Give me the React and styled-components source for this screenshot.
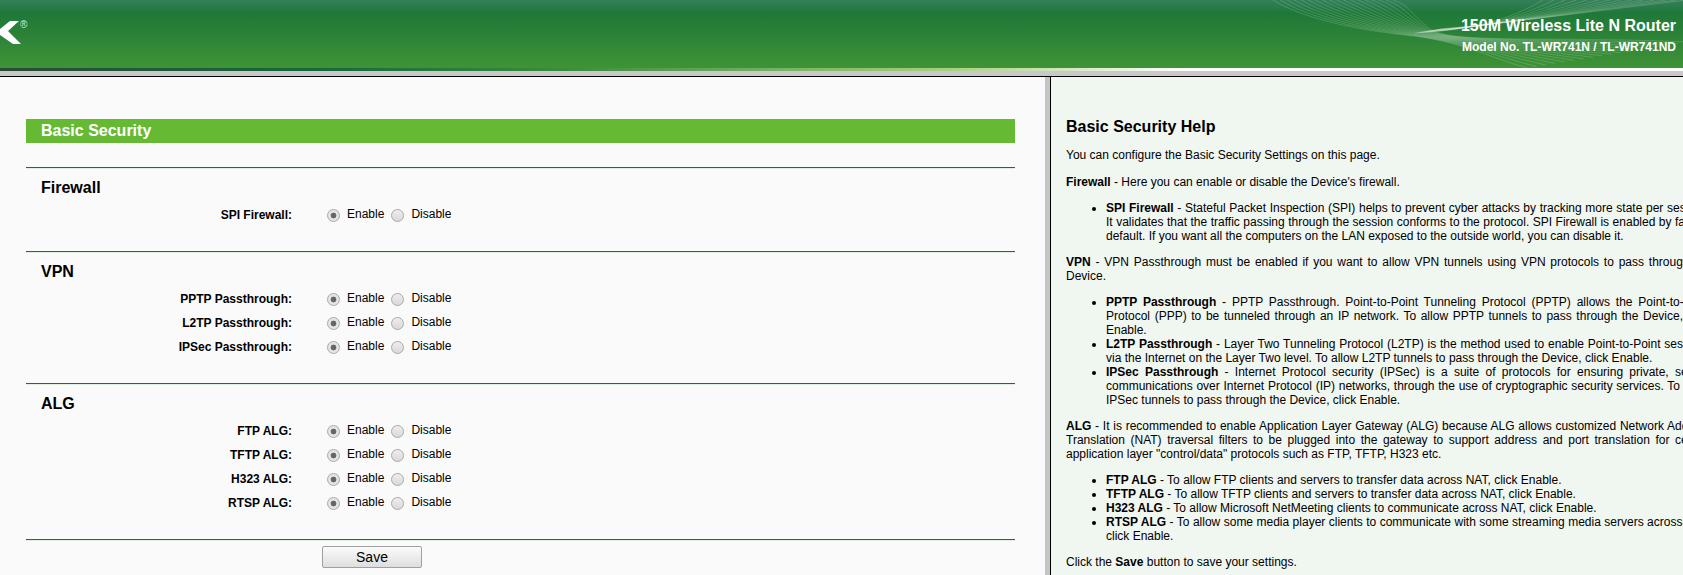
import React from "react";
import styled, { createGlobalStyle } from "styled-components";

const Global = createGlobalStyle`
  html, body { margin: 0; padding: 0; height: 100%; overflow: hidden; }
  body { font-family: "Liberation Sans", Arial, sans-serif; font-size: 12px; color: #000; }
`;
const Page = styled.div`
  display: flex; flex-direction: column; height: 575px; width: 1683px; overflow: hidden;
`;
const Banner = styled.header`
  position: relative; flex: none; height: 68px; overflow: hidden;
  background: linear-gradient(180deg, #34805a 0, #1e7838 13px, #3f9336 68px);
`;
const BannerStripe = styled.div`
  flex: none; height: 3px;
  background: linear-gradient(90deg, #2a4a3a 0, #17683c 320px, #3a8a3e 560px, #a8d080 950px, #ffffff 1183px);
`;
const GreyStrip = styled.div`
  flex: none; height: 5px; background: #c8c8c8; border-bottom: 1px solid #000;
`;
const Logo = styled.div`
  position: absolute; left: 0; top: 21px; display: flex;
`;
const Registered = styled.span`
  position: absolute; left: 20px; top: -2px; font-size: 10px; line-height: 12px; color: #d6e6d6;
`;
const Waves = styled.svg`
  position: absolute; left: 0; top: 0;
`;
const BannerText = styled.div`
  position: absolute; right: 7px; top: 16px; text-align: right; color: #fff; font-weight: bold;
`;
const Product = styled.div`
  font-size: 16px; line-height: 20px; margin-bottom: 2px; white-space: nowrap;
`;
const Model = styled.div`
  font-size: 12px; line-height: 18px; white-space: nowrap;
`;
const Panes = styled.div`
  flex: 1; display: flex; min-height: 0;
`;
const LeftPane = styled.main`
  flex: none; width: 1045px; background: #fafafa; padding: 42px 30px 0 26px; box-sizing: border-box; overflow: hidden;
`;
const Divider = styled.div`
  flex: none; width: 5px; background: #c4c4c4; border-right: 1px solid #000;
`;
const TitleBar = styled.div`
  height: 24px; line-height: 23px; background: #66b933; color: #fff; font-weight: bold; font-size: 16px; padding-left: 15px; margin-bottom: 24px;
`;
const Section = styled.section`
  border-top: 1px solid #1f6b3c; box-shadow: inset 0 1px 0 #e2efe2; padding: 10px 0 25px;
`;
const Closing = styled.div`
  border-top: 1px solid #1f6b3c; box-shadow: inset 0 1px 0 #e2efe2; padding: 6px 0 0 296px;
`;
const SectionTitle = styled.h2`
  margin: 0 0 4px 15px; font-size: 16px; line-height: 20px; font-weight: bold;
`;
const Row = styled.div`
  display: flex; align-items: center; height: 24px;
`;
const Label = styled.div`
  width: 266px; text-align: right; font-weight: bold; margin-right: 35px; padding-top: 1px;
`;
const Radio = styled.input.attrs({ type: "radio", readOnly: true })`
  appearance: none; margin: 3px 0 0 0; width: 13px; height: 13px; border-radius: 50%; box-sizing: border-box;
  border: 1px solid #a9a9a9; flex: none;
  background: ${(p) => p.checked
    ? "radial-gradient(circle, #666 0, #666 2.6px, #e4e4e4 3.2px)"
    : "linear-gradient(180deg, #eeeeee, #d8d8d8)"};
`;
const Option = styled.span`
  margin: 0 ${(p) => p.$after}px 0 7px; line-height: 14px;
`;
const SaveButton = styled.button`
  display: block; width: 100px; height: 22px; padding: 0; font: 14px "Liberation Sans", Arial, sans-serif; color: #000;
  border: 1px solid #a0a0a0; border-radius: 2px; background: linear-gradient(180deg, #fbfbfb, #dedede);
`;
const HelpPane = styled.aside`
  flex: 1; min-width: 0; overflow: hidden; background: #f0f6f0; padding: 41px 0 0 15px;
`;
const HelpBody = styled.div`
  width: 645px; line-height: 14px; text-align: justify;
`;
const HelpTitle = styled.h1`
  margin: 0 0 12px; font-size: 16px; line-height: 18px; font-weight: bold;
`;
const Para = styled.p`
  margin: 0 0 12px;
`;
const Lead = styled(Para)`
  margin-bottom: 13px;
`;
const List = styled.ul`
  margin: 0 0 12px; padding: 0 0 0 40px;
`;

const rows = [
  { title: "Firewall", items: ["SPI Firewall:"] },
  { title: "VPN", items: ["PPTP Passthrough:", "L2TP Passthrough:", "IPSec Passthrough:"] },
  { title: "ALG", items: ["FTP ALG:", "TFTP ALG:", "H323 ALG:", "RTSP ALG:"] },
];

const wavePaths = [];
for (let i = 0; i < 18; i++) {
  const t = i / 17;
  wavePaths.push(
    `M${1273 + t * 120} 0 C${1300 + t * 110} ${17 - t * 12},${1350 + t * 60} ${29 - t * 15},${1405 + t * 25} ${35 - t * 6} S${1480 + t * 70} ${54 - t * 18},${1527 + t * 160} ${68 - t * 26}`
  );
}
for (let i = 0; i < 14; i++) {
  const t = i / 13;
  wavePaths.push(`M${1415 + t * 25} ${33 - t * 4} C${1470 + t * 30} ${30 - t * 6},${1510 + t * 60} ${20 - t * 6},${1543 + t * 145} ${0}`);
}

export default function App() {
  return (
    <Page>
      <Global />
      <Banner>
        <Waves width="1683" height="68" viewBox="0 0 1683 68" fill="none" stroke="#ffffff" strokeWidth="0.6" strokeOpacity="0.28">
          {wavePaths.map((d) => <path key={d} d={d} />)}
        </Waves>
        <Logo>
          <svg width="22" height="24" viewBox="0 0 22 24"><path d="M0 8 L10 0 H19 L8 10 L21 23 H13 L0 14Z" fill="#fff" /></svg>
          <Registered>®</Registered>
        </Logo>
        <BannerText>
          <Product>150M Wireless Lite N Router</Product>
          <Model>Model No. TL-WR741N / TL-WR741ND</Model>
        </BannerText>
      </Banner>
      <BannerStripe />
      <GreyStrip />
      <Panes>
        <LeftPane>
          <TitleBar>Basic Security</TitleBar>
          {rows.map((s) => (
            <Section key={s.title}>
              <SectionTitle>{s.title}</SectionTitle>
              {s.items.map((l) => (
                <Row key={l}>
                  <Label>{l}</Label>
                  <Radio checked />
                  <Option $after={7}>Enable</Option>
                  <Radio checked={false} />
                  <Option $after={0}>Disable</Option>
                </Row>
              ))}
            </Section>
          ))}
          <Closing><SaveButton>Save</SaveButton></Closing>
        </LeftPane>
        <Divider />
        <HelpPane>
          <HelpBody>
            <HelpTitle>Basic Security Help</HelpTitle>
            <Lead>You can configure the Basic Security Settings on this page.</Lead>
            <Para><b>Firewall</b> - Here you can enable or disable the Device's firewall.</Para>
            <List>
              <li><b>SPI Firewall</b> - Stateful Packet Inspection (SPI) helps to prevent cyber attacks by tracking more state per session. It validates that the traffic passing through the session conforms to the protocol. SPI Firewall is enabled by factory default. If you want all the computers on the LAN exposed to the outside world, you can disable it.</li>
            </List>
            <Para><b>VPN</b> - VPN Passthrough must be enabled if you want to allow VPN tunnels using VPN protocols to pass through the Device.</Para>
            <List>
              <li><b>PPTP Passthrough</b> - PPTP Passthrough. Point-to-Point Tunneling Protocol (PPTP) allows the Point-to-Point Protocol (PPP) to be tunneled through an IP network. To allow PPTP tunnels to pass through the Device, click Enable.</li>
              <li><b>L2TP Passthrough</b> - Layer Two Tunneling Protocol (L2TP) is the method used to enable Point-to-Point sessions via the Internet on the Layer Two level. To allow L2TP tunnels to pass through the Device, click Enable.</li>
              <li><b>IPSec Passthrough</b> - Internet Protocol security (IPSec) is a suite of protocols for ensuring private, secure communications over Internet Protocol (IP) networks, through the use of cryptographic security services. To allow IPSec tunnels to pass through the Device, click Enable.</li>
            </List>
            <Para><b>ALG</b> - It is recommended to enable Application Layer Gateway (ALG) because ALG allows customized Network Address Translation (NAT) traversal filters to be plugged into the gateway to support address and port translation for certain application layer "control/data" protocols such as FTP, TFTP, H323 etc.</Para>
            <List>
              <li><b>FTP ALG</b> - To allow FTP clients and servers to transfer data across NAT, click Enable.</li>
              <li><b>TFTP ALG</b> - To allow TFTP clients and servers to transfer data across NAT, click Enable.</li>
              <li><b>H323 ALG</b> - To allow Microsoft NetMeeting clients to communicate across NAT, click Enable.</li>
              <li><b>RTSP ALG</b> - To allow some media player clients to communicate with some streaming media servers across NAT, click Enable.</li>
            </List>
            <Para>Click the <b>Save</b> button to save your settings.</Para>
          </HelpBody>
        </HelpPane>
      </Panes>
    </Page>
  );
}
